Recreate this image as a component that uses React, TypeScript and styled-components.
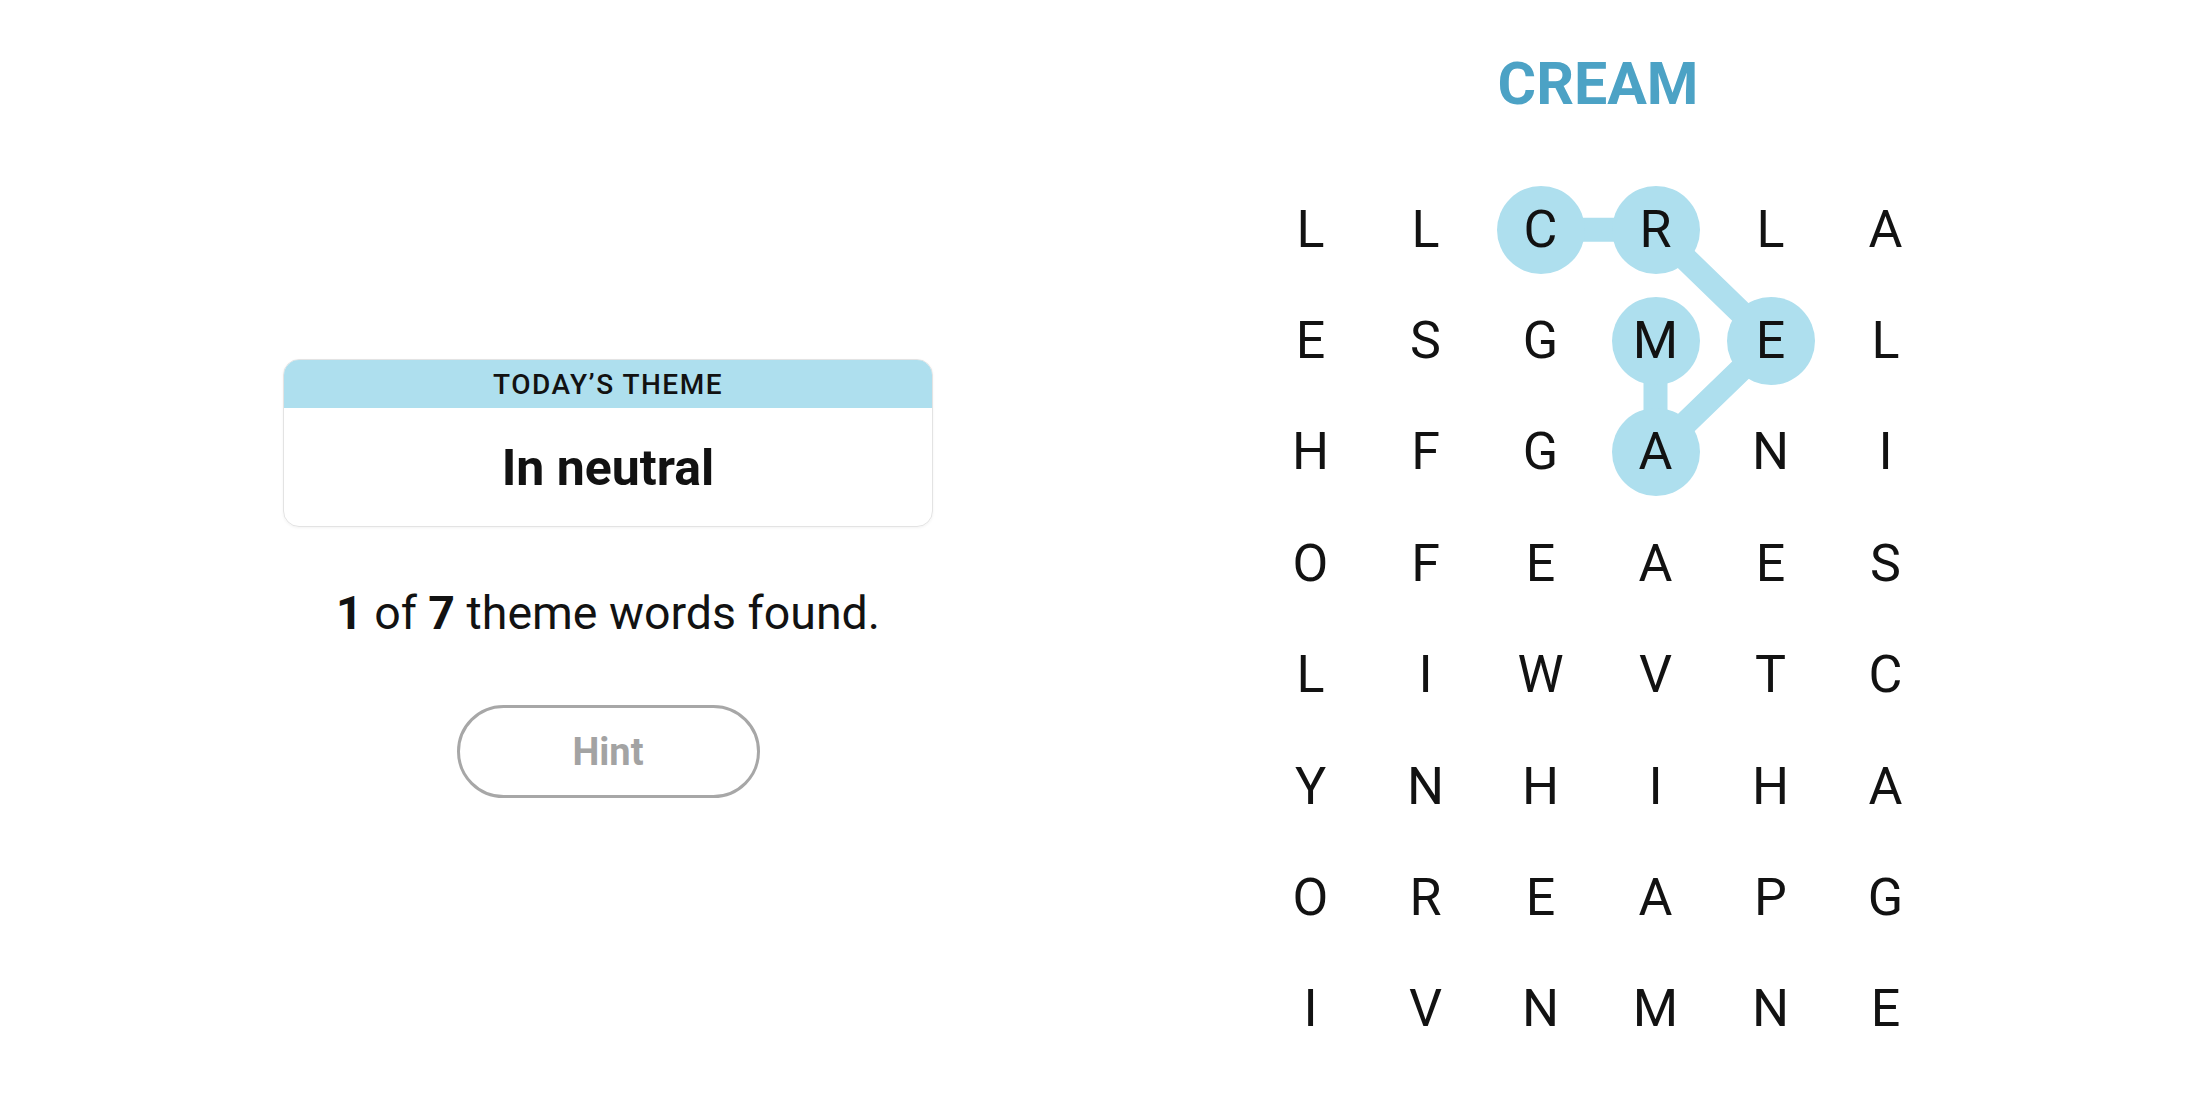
import React from "react";
import styled, { createGlobalStyle } from "styled-components";

const GlobalStyle = createGlobalStyle`
  html, body {
    margin: 0;
    padding: 0;
    background: #ffffff;
  }
  body {
    font-family: Roboto, "Liberation Sans", Arial, sans-serif;
    color: #121212;
  }
`;

const Page = styled.main`
  display: flex;
  align-items: flex-start;
  width: 2200px;
  height: 1100px;
  overflow: hidden;
  background: #ffffff;
`;

const LeftPanel = styled.section`
  width: 650px;
  margin-left: 283px;
  padding-top: 359px;
  display: flex;
  flex-direction: column;
  align-items: center;
`;

const ThemeCard = styled.div`
  width: 100%;
  height: 168px;
  box-sizing: border-box;
  border: 1px solid #e3e3e3;
  border-radius: 16px;
  overflow: hidden;
  box-shadow: 0 1px 3px rgba(0, 0, 0, 0.05);
  display: flex;
  flex-direction: column;
`;

const ThemeHeader = styled.div`
  height: 48px;
  background: #aedfee;
  display: flex;
  align-items: center;
  justify-content: center;
  font-family: Roboto, "Liberation Sans", sans-serif;
  font-weight: 500;
  font-size: 28px;
  letter-spacing: 1.5px;
  color: #121212;
`;

const ThemeBody = styled.div`
  flex: 1;
  display: flex;
  align-items: center;
  justify-content: center;
  padding-top: 2px;
  font-family: Roboto, "Liberation Sans", sans-serif;
  font-weight: 700;
  font-size: 50px;
  color: #121212;
`;

const Progress = styled.p`
  margin: 59px 0 0;
  height: 55px;
  line-height: 55px;
  font-family: Roboto, "Liberation Sans", sans-serif;
  font-size: 46.5px;
  font-weight: 400;
  color: #121212;
  white-space: nowrap;

  b {
    font-weight: 700;
  }
`;

const HintButton = styled.button`
  margin-top: 64px;
  width: 303px;
  height: 93px;
  box-sizing: border-box;
  border: 3px solid #a7a7a7;
  border-radius: 47px;
  background: #ffffff;
  font-family: Roboto, "Liberation Sans", sans-serif;
  font-weight: 700;
  font-size: 38px;
  color: #a3a3a3;
  display: flex;
  align-items: center;
  justify-content: center;
  padding: 0;
`;

const RightPanel = styled.section`
  width: 690px;
  margin-left: 320px;
  display: flex;
  flex-direction: column;
  align-items: stretch;
`;

const CurrentWord = styled.h1`
  margin: 0;
  height: 174px;
  box-sizing: border-box;
  padding-top: 54px;
  line-height: 1;
  text-align: center;
  font-family: Roboto, "Liberation Sans", sans-serif;
  font-weight: 700;
  font-size: 59px;
  color: #4ca2c5;
`;

const Board = styled.div`
  position: relative;
  display: grid;
  grid-template-columns: repeat(6, 115px);
  grid-template-rows: repeat(8, 111.4px);
`;

const PathLayer = styled.svg`
  position: absolute;
  inset: 0;
  width: 100%;
  height: 100%;
  pointer-events: none;
  z-index: 0;
`;

const Cell = styled.div`
  position: relative;
  z-index: 1;
  display: flex;
  align-items: center;
  justify-content: center;
`;

const Letter = styled.span<{ $selected?: boolean }>`
  width: 88px;
  height: 88px;
  border-radius: 50%;
  display: flex;
  align-items: center;
  justify-content: center;
  background: ${(p) => (p.$selected ? "#aedfee" : "transparent")};
  font-family: Roboto, "Liberation Sans", sans-serif;
  font-weight: 400;
  font-size: 52px;
  line-height: 1;
  color: #121212;
`;

const rows = [
  "LLCRLA",
  "ESGMEL",
  "HFGANI",
  "OFEAES",
  "LIWVTC",
  "YNHIHA",
  "OREAPG",
  "IVNMNE",
];

const path: [number, number][] = [
  [0, 2],
  [0, 3],
  [1, 4],
  [2, 3],
  [1, 3],
];

const COL_W = 115;
const ROW_H = 111.4;

export default function App() {
  const selected = new Set(path.map(([r, c]) => `${r}-${c}`));
  const points = path
    .map(([r, c]) => `${COL_W / 2 + COL_W * c},${ROW_H / 2 + ROW_H * r}`)
    .join(" ");

  return (
    <>
      <GlobalStyle />
      <Page>
        <LeftPanel>
          <ThemeCard>
            <ThemeHeader>TODAY’S THEME</ThemeHeader>
            <ThemeBody>In neutral</ThemeBody>
          </ThemeCard>
          <Progress>
            <b>1</b> of <b>7</b> theme words found.
          </Progress>
          <HintButton>Hint</HintButton>
        </LeftPanel>
        <RightPanel>
          <CurrentWord>CREAM</CurrentWord>
          <Board>
            <PathLayer viewBox={`0 0 ${COL_W * 6} ${ROW_H * 8}`}>
              <polyline
                points={points}
                fill="none"
                stroke="#aedfee"
                strokeWidth={24}
                strokeLinejoin="round"
                strokeLinecap="round"
              />
            </PathLayer>
            {rows.map((row, r) =>
              row.split("").map((ch, c) => (
                <Cell key={`${r}-${c}`}>
                  <Letter $selected={selected.has(`${r}-${c}`)}>{ch}</Letter>
                </Cell>
              ))
            )}
          </Board>
        </RightPanel>
      </Page>
    </>
  );
}
